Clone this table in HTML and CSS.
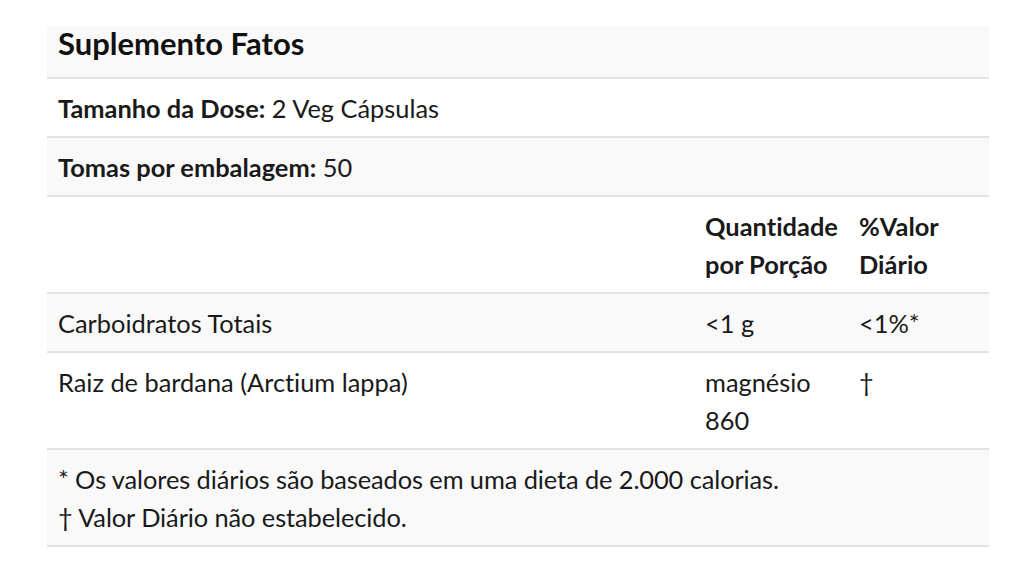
FILE: index.html
```html
<!DOCTYPE html>
<html lang="pt">
<head>
<meta charset="utf-8">
<title>Suplemento Fatos</title>
<link rel="stylesheet" href="styles.css">
</head>
<body>
<section class="facts">
  <div class="row title-row stripe">
    <h2 class="title">Suplemento Fatos</h2>
  </div>
  <div class="row">
    <div class="cell full"><strong>Tamanho da Dose:</strong> 2 Veg Cápsulas</div>
  </div>
  <div class="row stripe">
    <div class="cell full"><strong>Tomas por embalagem:</strong> 50</div>
  </div>
  <div class="row grid">
    <div class="cell"></div>
    <div class="cell head">Quantidade por Porção</div>
    <div class="cell head">%Valor Diário</div>
  </div>
  <div class="row grid stripe">
    <div class="cell">Carboidratos Totais</div>
    <div class="cell">&lt;1 g</div>
    <div class="cell">&lt;1%*</div>
  </div>
  <div class="row grid">
    <div class="cell">Raiz de bardana (Arctium lappa)</div>
    <div class="cell">magnésio 860</div>
    <div class="cell">†</div>
  </div>
  <div class="row stripe footer">
    <div class="cell full">
      <p>* Os valores diários são baseados em uma dieta de 2.000 calorias.</p>
      <p>† Valor Diário não estabelecido.</p>
    </div>
  </div>
</section>
</body>
</html>
```

FILE: styles.css
```css
html, body {
  margin: 0;
  padding: 0;
  background: #ffffff;
}

body {
  padding: 26px 0 0 47px;
  font-family: Lato, "Open Sans", Arial, sans-serif;
  color: #1a1a1a;
  font-size: 25.4px;
  line-height: 38px;
  font-variant-ligatures: none;
}

.facts {
  width: 942px;
}

.row {
  border-bottom: 2px solid #e2e2e2;
}

.stripe {
  background: #f9f9f9;
}

.grid {
  display: grid;
  grid-template-columns: 647px 154px 1fr;
}

.cell {
  padding: 10px 11px 9px 11px;
}

.head {
  font-weight: 700;
}

.title-row {
  padding: 2px 11px 19px 11px;
}

.title {
  margin: 0;
  font-size: 31px;
  font-weight: 700;
  line-height: 30px;
  color: #111;
}

strong {
  font-weight: 700;
}

.footer p {
  margin: 0;
  letter-spacing: -0.09px;
}
```
